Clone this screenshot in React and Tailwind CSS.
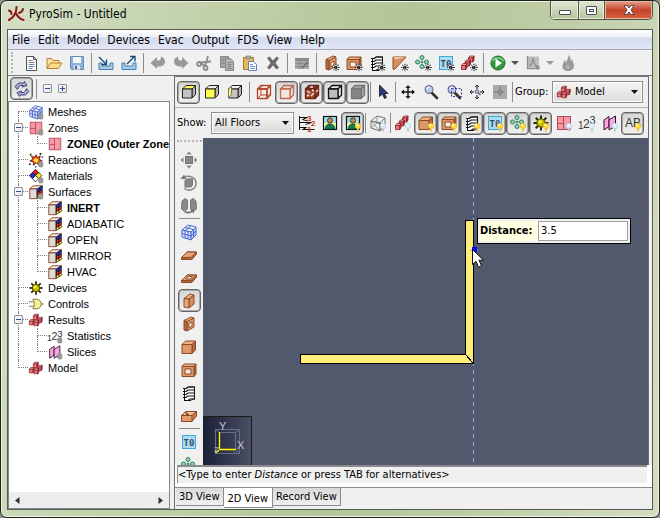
import { useState } from 'react'
import clsx from 'clsx'

const RAYS = [0, 45, 90, 135]
const EDGE = '#8a4a26'

function Icon({ children, size = 18 }) {
  return (
    <svg width={size} height={size} viewBox="0 0 18 18" fill="none" className="block shrink-0" aria-hidden="true">
      {children}
    </svg>
  )
}

// ---- overlays ----
const Star = () => (
  <g>
    <circle cx="14" cy="13.5" r="3" fill="#fff" opacity="0.8" />
    {RAYS.map(a => (
      <path key={a} d="M14 9.800v7.400" stroke="#111" strokeWidth="1" strokeDasharray="1.6 0.6" transform={`rotate(${a} 14 13.5)`} />
    ))}
  </g>
)

const Bulb = ({ off }) => (
  <g>
    <circle cx="14" cy="12" r="2.8" fill={off ? '#d8eef8' : '#ffd92e'} stroke={off ? '#a9c9dc' : '#e8b030'} strokeWidth="0.5" />
    <path d="M13 14.500h2V17.500h-2z" fill={off ? '#b4cbd8' : '#e9c860'} />
    <circle cx="13.2" cy="11.2" r="1" fill="#fff" />
  </g>
)

const Dot = () => <path d="M12 11.5c1.2-1 3.600-1 4.800 0v4.800c-1.200 1-3.600 1-4.800 0z" fill="#9a9a9a" stroke="#7f7f7f" strokeWidth="0.5" />

// ---- shapes ----
const Box = () => (
  <g stroke={EDGE} strokeWidth="1" strokeLinejoin="round">
    <path d="M2 6.500 5.500 3h10L12 6.500z" fill="#f0b184" />
    <path d="M12 6.500 15.500 3v9L12 15.500z" fill="#b8683b" />
    <path d="M2 6.500h10v9H2z" fill="#de9769" />
  </g>
)

const Room = () => (
  <g stroke={EDGE} strokeWidth="1" strokeLinejoin="round">
    <path d="M2 5.500 4 3h12l-2 2.500z" fill="#f0b184" />
    <path d="M14 5.500 16 3v10l-2 2.500z" fill="#b8683b" />
    <path d="M2 5.500h12v10H2z" fill="#de9769" />
    <path d="M5 8h6v5H5z" fill="#f8eee6" />
  </g>
)

const Wall = () => (
  <g stroke={EDGE} strokeWidth="1" strokeLinejoin="round">
    <path d="M4 6.500 10 2l4 1-5 4z" fill="#f0b184" />
    <path d="M9 7l5-4v9l-5 4z" fill="#d98d5f" />
    <path d="M4 6.500 9 7v9l-5-1z" fill="#e9a87c" />
  </g>
)

const WallHole = () => (
  <g stroke={EDGE} strokeWidth="1" strokeLinejoin="round">
    <path d="M4 5.500 11 2l3 1-6 4z" fill="#f0b184" />
    <path d="M7 6.500 14 3v9l-7 4z" fill="#e09b6e" />
    <path d="M4 5.500l3 1V16l-3-1z" fill="#b8683b" />
    <path d="M9 8.500 12 7v4l-3 2z" fill="#fff" />
  </g>
)

const Slab = ({ hole }) => (
  <g stroke={EDGE} strokeWidth="1" strokeLinejoin="round">
    <path d="M1.500 11.500 7 6h9.500v2L12 13.500H1.500z" fill="#b8683b" />
    <path d="M1.500 11.500 7 6h9.500L11 11.500z" fill="#e9a277" />
    {hole && <path d="M6 10l2-2.300h4.500l-2 2.300z" fill="#fff" />}
  </g>
)

const Tray = () => (
  <g stroke={EDGE} strokeWidth="1" strokeLinejoin="round">
    <path d="M1.500 8.500 6 4.500h10.500v4.500L12 14.500H1.500z" fill="#c9794b" />
    <path d="M1.500 8.500 6 4.500h10.500L12 8.500z" fill="#f2bd95" />
    <path d="M6.500 8.500V5.500L9 8z" fill="#a4592f" />
    <path d="M1.500 8.500H12v6H1.500z" fill="#e09b6e" />
  </g>
)

const Ramp = () => (
  <g>
    <path d="M2 3h13L3.500 15.500 2 15z" fill="#d98d5f" stroke={EDGE} strokeLinejoin="round" />
    <path d="M2 3h13L4.500 5.500z" fill="#f3c5a0" />
  </g>
)

const Vent = () => (
  <g stroke="#111">
    <path d="M4.500 4.500h2l2-1.500h6v12h-2l-1.500 1.500H4.500z" fill="#fff" />
    <path d="M3 4.500h3l2-1.500h7M3 7.500h3l2-1.500h7M3 10.500h3L8 9h7M3 13.500h3L8 12h7M4 16.500h4l2-1.500h5" strokeWidth="1.200" />
  </g>
)

const Circles = () => (
  <g fill="#8fd6b0" stroke="#2c7d57" strokeWidth="1">
    <circle cx="8" cy="3.500" r="2" />
    <circle cx="3.500" cy="8" r="2" />
    <circle cx="12.500" cy="8" r="2" />
    <circle cx="8" cy="12.500" r="2" />
    <circle cx="8" cy="8" r="1" />
  </g>
)

const Thermo = () => (
  <g>
    <rect x="2.500" y="2.500" width="13" height="13" fill="#a9dcf2" stroke="#42a8dc" />
    <text x="9" y="12.500" textAnchor="middle" fontSize="9" fontWeight="bold" fontFamily="DejaVu Sans Mono, monospace" fill="#35505e">T0</text>
  </g>
)

const CubeStack = ({ x, y }) => (
  <g stroke="#8a1c22" strokeWidth="0.800" strokeLinejoin="round">
    <path d={`M${x} ${y + 2}l1.500-2h4l-1.200 2z`} fill="#f7b4b4" />
    <path d={`M${x} ${y + 2}h4.300v4H${x}z`} fill="#e57a80" />
    <path d={`M${x + 4.300} ${y + 2}l1.200-2v4l-1.200 2z`} fill="#b8404a" />
  </g>
)

const RedCubes = () => (
  <g>
    <CubeStack x={6} y={2.500} />
    <CubeStack x={10.500} y={6} />
    <CubeStack x={1.500} y={8.500} />
    <CubeStack x={6.800} y={9.500} />
  </g>
)

const RedBlocks = () => (
  <g>
    <CubeStack x={8.500} y={2} />
    <CubeStack x={5} y={6} />
    <CubeStack x={1.500} y={9.500} />
  </g>
)

const Mesh = ({ gray }) => (
  <g stroke={gray ? '#777' : '#4a68cc'} strokeWidth="1">
    <path d="M2 7 8 2l8 2-5 5z" fill={gray ? 'none' : '#eef3ff'} />
    <path d="M2 7l9 2v8l-9-3z" fill={gray ? 'none' : '#dce6ff'} />
    <path d="M11 9l5-5v8l-5 5z" fill={gray ? 'none' : '#bccbf7'} />
    {gray
      ? <path d="M2 14 8 9l8 3M8 2v7M2 7l9 10M11 9l5 3" strokeWidth="0.700" />
      : <path d="M5 7.700v7.300M8 8.400V16M2 10.500l9 2.500 5-5M5 4.500l8.500 2V14.500M11 2.800 5 7.700" />}
  </g>
)

const Zone = () => (
  <g stroke="#a8505a">
    <rect x="2.500" y="2.500" width="13" height="13" fill="#fa98a4" />
    <path d="M8.500 2.500v13M2.500 9.500h6" />
  </g>
)

const Sun = () => (
  <g>
    {RAYS.map(a => <path key={a} d="M9 1.500v15" stroke="#2b2b12" strokeWidth="2" transform={`rotate(${a} 9 9)`} />)}
    <circle cx="9" cy="9" r="4.200" fill="#c9b800" stroke="#4a4600" />
    <circle cx="8" cy="7.800" r="1.700" fill="#f7ee4a" />
  </g>
)

const Digits = () => (
  <g fontFamily="Liberation Sans, sans-serif" fill="#333">
    <text x="0" y="15" fontSize="10">1</text>
    <text x="5" y="14" fontSize="12">2</text>
    <text x="11.500" y="10" fontSize="11">3</text>
  </g>
)

const Slices = () => (
  <g fill="#f7a8e2" stroke="#331126" strokeLinejoin="round">
    <path d="M3 6l5-3.500v10L3 16z" />
    <path d="M8 6l6.500-4v10L8 16z" />
  </g>
)

const Surface = () => (
  <g strokeLinejoin="round">
    <path d="M2 5.500 5.500 2H16l-5 3.500z" fill="#f2ece8" stroke="#8b3a1c" />
    <path d="M2 5.500h8v11H2z" fill="#dcdcdc" stroke="#8b3a1c" />
    <path d="M10 5.500 16.500 1.500v11.500L10 17z" fill="#111" />
    <path d="M10.800 6l2.200-1.300v2.800l-2.200 1.100zM13.800 4.200 16 3v2.800l-2.200 1.100z" fill="#2038e8" />
    <path d="M10.800 9.600l2.200-1.100v2.700l-2.200 1.200z" fill="#e02222" />
    <path d="M13.800 8l2.200-1v2.500l-2.200 1.200z" fill="#e02222" />
    <path d="M10.800 13.300l2.200-1.200v2.300l-2.200 1.300z" fill="#ffe01a" />
    <path d="M13.800 11.700l2.200-1.200v2l-2.200 1.300z" fill="#ffe01a" />
  </g>
)

const Reaction = () => (
  <g>
    <path d="M9 3l1.500 3L14 4.500 12.500 8 16 10l-3.500 1 .5 4-3.500-2.500L6 15l.3-3.500L2 10l3.500-2L3.500 4l4 2z" fill="#ff3a12" stroke="#2b1a00" strokeWidth="0.800" />
    <path d="M9 6l1 2 2-.5-1 1.800 1.500 1-2 .5L10 12.500 8.500 11 7 12l.3-2-1.800-.5L7 8.500 6.500 7l1.800.8z" fill="#ffe93b" />
    <path d="M2 2h2v2H2zM13 1h2v2h-2zM1 13h2v1.500H1zM8 16h1.500v1.500H8zM15.500 5H17v1.500h-1.500z" fill="#111" />
    <path d="M3 3l2 2M15 3l-1 1" stroke="#ffd400" />
  </g>
)

const Material = () => (
  <g stroke="#111" strokeWidth="0.900">
    <path d="M8.500 1.500 12 5 8.500 8.500 5 5z" fill="#e81818" />
    <path d="M5 5l3.500 3.500L5 12 1.500 8.500z" fill="#1530e0" />
    <path d="M12 5l3.500 3.500L12 12 8.500 8.500z" fill="#ffe51c" />
    <path d="M8.500 8.500 12 12l-3.500 3.500L5 12z" fill="#fff" />
  </g>
)

const Gate = () => (
  <g stroke="#6d6a3e">
    <path d="M5.500 3.500h4c4 0 5.500 3.500 5.500 5.500s-1.500 5.500-5.500 5.500h-4c2-3 2-8 0-11z" fill="#fbee8f" />
    <path d="M1 6.500h5M1 11.500h5M15 9h3" />
  </g>
)

const Person = () => (
  <g>
    <rect x="2.500" y="2.500" width="13" height="13" fill="#9fe2ee" stroke="#111" strokeWidth="1.200" />
    <rect x="3" y="9" width="12" height="3" fill="#f3f29b" />
    <circle cx="9" cy="6.500" r="2.600" fill="#c98849" stroke="#222" strokeWidth="0.800" />
    <path d="M4.500 15c0-4 2-5 4.500-5s4.500 1 4.500 5z" fill="#158045" stroke="#0b3d22" strokeWidth="0.800" />
  </g>
)

const WireCube = ({ color, face, back }) => (
  <g stroke={color} strokeWidth="1.300" strokeLinejoin="round">
    <path d="M2.500 6 6 2.500h9.500L12 6z" fill={back} />
    <path d="M12 6l3.500-3.500v9.500L12 15.500z" fill={back} />
    <path d="M2.500 6H12v9.500H2.500z" fill={face} />
  </g>
)

const ViewCube = ({ side }) => (
  <g stroke="#222" strokeWidth="1" strokeLinejoin="round">
    <path d="M2.500 6 6 2.500h9.500L12 6z" fill={side === 'top' ? '#ffff5a' : '#eee'} />
    <path d="M12 6l3.500-3.500v9L12 15z" fill="#b5b5b5" />
    <path d="M2.500 6H12v9H2.500z" fill={side === 'front' ? '#ffff50' : '#c4c4c4'} />
    {side === 'side' && <path d="M2.500 6l3-3v8.500l-3 3z" fill="#ffff5a" stroke="#777" />}
  </g>
)

const Magnifier = () => (
  <g>
    <path d="M10 10l5 5" stroke="#3c2b21" strokeWidth="2.600" strokeLinecap="round" />
    <circle cx="7" cy="6.500" r="4" fill="#b9c9ef" stroke="#555d78" />
    <path d="M5 6c.5-1.500 1.500-2 2.500-2" stroke="#fff" strokeWidth="1.200" />
  </g>
)

const Arrows = ({ color = '#111' }) => (
  <g fill={color}>
    {[0, 90, 180, 270].map(a => (
      <path key={a} d="M9 2l2.600 3H9.700v4H8.300V5H6.400z" transform={`rotate(${a} 9 9)`} />
    ))}
  </g>
)

const Page = () => (
  <g>
    <path d="M4.500 2.500h7l3 3v11h-10z" fill="#fffdf0" stroke="#4b5060" />
    <path d="M11.500 2.500v3h3" stroke="#4b5060" />
    <path d="M6.500 6.500h4M6.500 8.500h6M6.500 10.500h6M6.500 12.500h6M6.500 14.500h4" stroke="#6f86bd" />
  </g>
)

const Folder = () => (
  <g stroke="#b88030" strokeLinejoin="round">
    <path d="M2 14.500v-10h4.500l1.500 2h6v3" fill="#fbe3a0" />
    <path d="M2 14.500 5.500 9H17l-3.500 5.500z" fill="#ffd98c" />
  </g>
)

const Floppy = () => (
  <g>
    <path d="M2.500 2.500h13v13h-12l-1-1z" fill="#8fb2d8" stroke="#6a8db8" />
    <path d="M5 3h8v6H5z" fill="#f3f7fb" />
    <path d="M6 11.500h6v4H6z" fill="#e3eaf1" />
    <path d="M7 12h2v3H7z" fill="#41638c" />
  </g>
)

const Transfer = ({ out }) => (
  <g>
    <path d="M2 9v6.500h14V9h-3v3H5V9z" fill="#a9cbe8" stroke="#4580b4" />
    {out
      ? <path d="M7 10l7-7M10 2.500h5v5" stroke="#15497a" strokeWidth="1.300" />
      : <path d="M2 3l7 7M9.500 5.500v5h-5" stroke="#15497a" strokeWidth="1.300" />}
  </g>
)

const Undo = ({ flip }) => (
  <path
    d="M1.500 9 8 3v3.500h1c2.500 0 3-1.500 3-4 3 1 4.500 3.500 4 6-.5 2.500-3 4-6 4H8V15z"
    fill="#999"
    transform={flip ? 'translate(18 0) scale(-1 1)' : undefined}
  />
)

const Scissors = () => (
  <g stroke="#8b8b8b" strokeWidth="1.800">
    <path d="M5 8.500l11-1M10 13l3-11" />
    <circle cx="4" cy="10" r="2" />
    <circle cx="10.500" cy="14" r="2" />
    <path d="M5 9l5.500 3" />
  </g>
)

const Copy = () => (
  <g>
    <path d="M2.500 2.500h8v11h-8z" fill="#a3a3a3" stroke="#888" />
    <path d="M7.500 4.500h5l3 3v9h-8z" fill="#b3b3b3" stroke="#858585" />
    <path d="M9.500 8.500h4M9.500 10.500h4M9.500 12.500h4M9.500 14.500h4M4.500 5.500h2M4.500 7.500h2M4.500 9.500h2" stroke="#808080" />
  </g>
)

const Paste = () => (
  <g>
    <path d="M2.500 3.500h10v12h-10z" fill="#e8b65c" stroke="#ae7a24" />
    <path d="M5 2h5v3H5z" fill="#a7adb5" stroke="#777" strokeWidth="0.600" />
    <path d="M7.500 7.500h5l3 3v6h-8z" fill="#fff" stroke="#5d7eb0" />
    <path d="M9 10.500h3M9 12.500h5M9 14.500h5" stroke="#6b8ec0" />
  </g>
)

const Cross = () => <path d="M3 4l2.500-1.500L9 6.500l3.500-4L15 4l-3.500 5 3.500 4.500-2.500 2L9 11.500l-3.500 4L3 13.500 6.500 9z" fill="#6c6c6c" />

const EditTable = () => (
  <g>
    <path d="M2 4h14v11H2z" fill="#a8a8a8" />
    <path d="M2 4h14v3H2z" fill="#8a8a8a" />
    <path d="M2 9.500h14M2 12.500h14M7 7v8" stroke="#8c8c8c" />
    <path d="M9 14l6-6" stroke="#777" strokeWidth="2" />
  </g>
)

const Run = () => (
  <g>
    <circle cx="9" cy="9" r="7" fill="#2f9a3c" stroke="#1d6b31" />
    <path d="M3.500 7c1.500-4 9-4 11 0" stroke="#8fd18f" strokeWidth="1.500" />
    <path d="M6.500 4.500 13 9l-6.500 4.500z" fill="#fff" />
  </g>
)

const Plot = () => (
  <g>
    <path d="M3 2.500h12v11H3z" fill="#bdbdbd" />
    <path d="M3.500 2v12.500H16M5 12l2-1 2-6 2 6 3 1" stroke="#8e8e8e" strokeWidth="1.300" />
    <path d="M11 12h5l-2.500 4z" fill="#8e8e8e" />
  </g>
)

const Flame = () => (
  <g>
    <path d="M9 17c-4 0-6-2.500-5.500-5.500C4 9 5 8.500 5 6c1 .5 1.500 1.500 1.700 2.500C8 6.500 9.500 4.500 9.500 1c2 2 2.500 4 2 6.500L13.500 5c-.5 3 1.500 3.500 1.500 6.500 0 3-2 5.500-6 5.500z" fill="#999" />
    <path d="M8 15c-1.500-1.500-1-3.500 1-5 0 2 2.500 2.500 1.500 5" fill="#b5b5b5" />
  </g>
)

const FloorList = () => (
  <g stroke="#111">
    <path d="M1.500 2v14M1.500 3.500h8l-5 2 5 1.500M1.500 8.500h12l-6 2M1.500 13.500h7l-4 2h12" />
    <g fill="#cc3311" stroke="none" fontFamily="Liberation Sans, sans-serif" fontWeight="bold" fontSize="8">
      <text x="9" y="7">3</text>
      <text x="13" y="12">2</text>
      <text x="9" y="17.500">1</text>
    </g>
  </g>
)

const Sync = () => (
  <g fill="#a5a8df" stroke="#333859" strokeWidth="0.900" strokeLinejoin="round">
    <path d="M4.500 9.500 2 6.500 5.500 3h5l1-1.500 2.500 4-4.500 1.500.7-1.500h-3L5.500 7z" />
    <path d="M13.500 8.500l2.500 3-3.500 3.500h-5l-1 1.500-2.500-4L8.500 11l-.7 1.500h3L12.500 11z" />
  </g>
)

const Move3D = () => (
  <g fill="#888">
    <rect x="5.500" y="5.500" width="7" height="7" stroke="#707070" />
    {[0, 90, 180, 270].map(a => <path key={a} d="M9 0.500l2.800 3H6.200z" transform={`rotate(${a} 9 9)`} />)}
  </g>
)

const Rotate3D = () => (
  <g>
    <path d="M5 6.500 6.500 5h6v6l-1.500 2H5z" fill="#888" stroke="#707070" />
    <path d="M4 3.500c5-3 12.500 0 12 6.500-.5 6-8 8-12 4" stroke="#8c8c8c" strokeWidth="1.600" />
    <path d="M0.500 5 4 0.500 6 5z" fill="#777" />
  </g>
)

const Mirror3D = () => (
  <g fill="#888">
    <path d="M2 4l3-2.500 2.500 1.500v9L4 14l-2.500-2zM16 4l-3-2.500L10.500 3v9l3.500 2 2.500-2z" stroke="#777" />
    <path d="M4 15c3 2 6 2 8 0l2 1.500v-4h-4l1.200 1.200c-2 1.300-4 1-6 0z" fill="#777" />
  </g>
)

const Cursor = () => <path d="M5.500 2v11.500l3-2.500 2 4.500 2-1-2-4h3.500z" fill="#2d3a78" stroke="#111" strokeWidth="0.800" />

// ---- controls ----
function ToolButton({ label, pressed, disabled, children }) {
  return (
    <button
      type="button"
      aria-label={label}
      aria-pressed={pressed}
      disabled={disabled}
      className={clsx(
        'flex h-[23px] w-[23px] shrink-0 items-center justify-center rounded-[4px]',
        pressed && 'border border-[#666] bg-linear-to-b from-[#d6d6d6] to-[#f0f0f0] shadow-[inset_0_0_0_1px_#a8a8a8]'
      )}
    >
      <Icon>{children}</Icon>
    </button>
  )
}

const Sep = ({ wide }) => (
  <span className={clsx('flex h-5 shrink-0 justify-center', wide ? 'w-[6px]' : 'w-[2px]')}>
    <span className="w-px bg-[#8b8b8b]" />
  </span>
)

const DropArrow = ({ label, faded }) => (
  <button type="button" aria-label={label} className="flex h-5 w-3 shrink-0 items-center justify-center">
    <svg width="8" height="4" viewBox="0 0 8 4" aria-hidden="true">
      <path d="M0 0h8L4 4z" fill={faded ? '#999' : '#555'} />
    </svg>
  </button>
)

function Combo({ id, options, icon, className }) {
  return (
    <span className={clsx('relative flex h-[22px] shrink-0', className)}>
      <select
        id={id}
        className={clsx(
          'w-full appearance-none border border-[#8e8f8f] bg-linear-to-b from-[#f4f4f4] to-[#dcdcdc] text-[11px] leading-4 outline outline-1 -outline-offset-2 outline-white',
          icon ? 'pl-[22px]' : 'pl-[3px]'
        )}
      >
        {options.map(o => <option key={o}>{o}</option>)}
      </select>
      {icon && <span className="pointer-events-none absolute top-[3px] left-1"><Icon size={16}>{icon}</Icon></span>}
      <svg className="pointer-events-none absolute top-[9px] right-[5px]" width="7" height="4" viewBox="0 0 7 4" aria-hidden="true">
        <path d="M0 0h7L3.500 4z" fill="#111" />
      </svg>
    </span>
  )
}

// ---- window chrome ----
function TitleBar() {
  return (
    <header className="flex h-7 shrink-0 items-start justify-between">
      <div className="flex h-[25px] items-center gap-1">
        <Icon>
          <g stroke="#8c1414" strokeWidth="2" strokeLinecap="round">
            <path d="M9.500 2c0 6-2 10-7.500 13" />
            <path d="M9 8.500c1.500 3 4 5.500 7.500 6.500" />
            <path d="M2 5.500c1.500.5 2.500 2 2.500 3.500M16 4c-.5 2-2 3.500-4 4" />
          </g>
        </Icon>
        <h1 className="text-[12px] leading-4">PyroSim - Untitled</h1>
      </div>
      <div className="flex h-[19px] overflow-hidden rounded-b-[5px] border border-t-0 border-[#4d5643]">
        <button type="button" aria-label="Minimize" className="flex w-[27px] items-center justify-center bg-linear-to-b from-[#dfe6d3] via-[#cbd6b9] to-[#b5c59d] pt-1 shadow-[inset_0_0_0_1px_#e7eedc]">
          <span className="h-[5px] w-3 rounded-[1px] border border-[#4a4d55] bg-white" />
        </button>
        <button type="button" aria-label="Maximize" className="flex w-[27px] items-center justify-center border-x border-[#4d5643] bg-linear-to-b from-[#dfe6d3] via-[#cbd6b9] to-[#b5c59d] shadow-[inset_0_0_0_1px_#e7eedc]">
          <span className="flex h-[9px] w-[11px] items-center justify-center rounded-[1px] border border-[#4a4d55] bg-white">
            <span className="h-[3px] w-[5px] border border-[#4a4d55]" />
          </span>
        </button>
        <button type="button" aria-label="Close" className="flex w-[47px] items-center justify-center bg-linear-to-b from-[#e5a08c] via-[#c5432a] to-[#d8633f] shadow-[inset_0_0_0_1px_#eab5a0]">
          <svg width="12" height="10" viewBox="0 0 12 10" aria-hidden="true">
            <path d="M1 .5h3L6 3l2-2.500h3L8 5l3 4.500H8L6 7 4 9.500H1L4 5z" fill="#fff" stroke="#4a3c44" strokeWidth="0.900" />
          </svg>
        </button>
      </div>
    </header>
  )
}

const MENUS = ['File', 'Edit', 'Model', 'Devices', 'Evac', 'Output', 'FDS', 'View', 'Help']

function MenuBar() {
  return (
    <nav className="flex h-5 shrink-0 items-center gap-2 border-b border-[#a5a9b5] bg-[linear-gradient(#ffffff,#eceff7_38%,#d4dbed_40%,#e2e7f6)] pl-1 text-[12px] leading-4">
      {MENUS.map(m => <button key={m} type="button">{m}</button>)}
    </nav>
  )
}

function MainToolbar() {
  return (
    <div role="toolbar" aria-label="Main" className="flex h-[26px] shrink-0 items-center border-b border-[#77777f] pl-[3px]">
      <span className="mr-[6px] h-[21px] border-l-2 border-dotted border-[#b5b5b5]" />
      <ToolButton label="New"><Page /></ToolButton>
      <ToolButton label="Open"><Folder /></ToolButton>
      <ToolButton label="Save"><Floppy /></ToolButton>
      <Sep wide />
      <ToolButton label="Import"><Transfer /></ToolButton>
      <ToolButton label="Export"><Transfer out /></ToolButton>
      <Sep wide />
      <ToolButton label="Undo" disabled><Undo /></ToolButton>
      <ToolButton label="Redo" disabled><Undo flip /></ToolButton>
      <ToolButton label="Cut" disabled><Scissors /></ToolButton>
      <ToolButton label="Copy" disabled><Copy /></ToolButton>
      <ToolButton label="Paste"><Paste /></ToolButton>
      <ToolButton label="Delete" disabled><Cross /></ToolButton>
      <Sep wide />
      <ToolButton label="Properties" disabled><EditTable /></ToolButton>
      <Sep wide />
      <ToolButton label="New obstruction"><WallHole /><Star /></ToolButton>
      <ToolButton label="New hole"><Room /><Star /></ToolButton>
      <ToolButton label="New vent"><Vent /><Star /></ToolButton>
      <ToolButton label="New triangle"><Ramp /><Star /></ToolButton>
      <ToolButton label="New particles"><Circles /><Star /></ToolButton>
      <ToolButton label="New thermocouple"><Thermo /><Star /></ToolButton>
      <ToolButton label="New group"><RedBlocks /><Star /></ToolButton>
      <Sep wide />
      <ToolButton label="Run FDS"><Run /></ToolButton>
      <DropArrow label="Run options" />
      <ToolButton label="Plot results" disabled><Plot /></ToolButton>
      <DropArrow label="Plot options" faded />
      <ToolButton label="Smokeview" disabled><Flame /></ToolButton>
    </div>
  )
}

// ---- model tree ----
const TREE = [
  { name: 'Meshes', icon: <><Mesh /><Dot /></> },
  { name: 'Zones', icon: <><Zone /><Dot /></>, items: [{ name: 'ZONE0 (Outer Zone', icon: <Zone />, bold: true }] },
  { name: 'Reactions', icon: <><Reaction /><Dot /></> },
  { name: 'Materials', icon: <><Material /><Dot /></> },
  {
    name: 'Surfaces',
    icon: <><Surface /><Dot /></>,
    items: [
      { name: 'INERT', icon: <Surface />, bold: true },
      { name: 'ADIABATIC', icon: <Surface /> },
      { name: 'OPEN', icon: <Surface /> },
      { name: 'MIRROR', icon: <Surface /> },
      { name: 'HVAC', icon: <Surface /> },
    ],
  },
  { name: 'Devices', icon: <Sun /> },
  { name: 'Controls', icon: <Gate /> },
  {
    name: 'Results',
    icon: <RedCubes />,
    items: [
      { name: 'Statistics', icon: <><Digits /><Dot /></> },
      { name: 'Slices', icon: <><Slices /><Dot /></> },
    ],
  },
  { name: 'Model', icon: <RedCubes /> },
]

function ExpandBox({ open, label, onClick }) {
  return (
    <button type="button" aria-label={label} onClick={onClick} className="flex h-[9px] w-[9px] items-center justify-center rounded-[1px] border border-[#8a8f99] bg-linear-to-br from-white to-[#e2e2e2]">
      <svg width="5" height="5" viewBox="0 0 5 5" aria-hidden="true">
        <path d={open ? 'M0 2.500h5' : 'M0 2.500h5M2.500 0v5'} stroke="#2f4a9a" />
      </svg>
    </button>
  )
}

function Branch({ first, last, children }) {
  return (
    <span className="relative flex h-4 w-[19px] shrink-0 pl-[9px]">
      <span className="flex flex-1 flex-col">
        <span className={clsx('h-2 border-b border-dotted border-[#808080]', !first && 'border-l')} />
        <span className={clsx('h-2 border-dotted border-[#808080]', !last && 'border-l')} />
      </span>
      {children && <span className="absolute top-[3px] left-[5px]">{children}</span>}
    </span>
  )
}

const TreeLabel = ({ node }) => (
  <>
    <Icon size={16}>{node.icon}</Icon>
    <span className={clsx('pl-1 whitespace-nowrap', node.bold && 'font-bold')}>{node.name}</span>
  </>
)

function ModelTree() {
  const [closed, setClosed] = useState([])
  const toggle = name => setClosed(c => (c.includes(name) ? c.filter(n => n !== name) : [...c, name]))

  return (
    <ul className="min-h-0 flex-1 overflow-hidden pt-[2px] font-['Liberation_Sans',sans-serif] text-[11px] leading-4">
      {TREE.map((node, i) => {
        const last = i === TREE.length - 1
        const open = !closed.includes(node.name)
        return (
          <li key={node.name}>
            <div className="flex">
              <Branch first={i === 0} last={last}>
                {node.items && <ExpandBox open={open} label={`Toggle ${node.name}`} onClick={() => toggle(node.name)} />}
              </Branch>
              <TreeLabel node={node} />
            </div>
            {node.items && open && (
              <ul>
                {node.items.map((item, j) => (
                  <li key={item.name} className="flex">
                    <span className="flex w-[19px] shrink-0 pl-[9px]">
                      {!last && <span className="border-l border-dotted border-[#808080]" />}
                    </span>
                    <Branch last={j === node.items.length - 1} />
                    <TreeLabel node={item} />
                  </li>
                ))}
              </ul>
            )}
          </li>
        )
      })}
    </ul>
  )
}

function TreePanel() {
  return (
    <aside className="flex w-[162px] shrink-0 flex-col">
      <div className="flex h-[25px] shrink-0 items-center pl-[2px]">
        <ToolButton label="Synchronize selection" pressed><Sync /></ToolButton>
        <Sep wide />
        <span className="flex gap-[6px] pl-1">
          <ExpandBox open label="Collapse all" />
          <ExpandBox label="Expand all" />
        </span>
      </div>
      <div className="flex min-h-0 flex-1 flex-col border border-[#828790] bg-white">
        <ModelTree />
        <div className="flex h-4 shrink-0 items-center justify-between bg-[#ededed] px-[6px]">
          <button type="button" aria-label="Scroll left" className="block">
            <svg width="5" height="7" viewBox="0 0 5 7" aria-hidden="true"><path d="M4.500 0v7L0 3.500z" fill="#333" /></svg>
          </button>
          <button type="button" aria-label="Scroll right" className="block">
            <svg width="5" height="7" viewBox="0 0 5 7" aria-hidden="true"><path d="M.5 0v7L5 3.500z" fill="#333" /></svg>
          </button>
        </div>
      </div>
    </aside>
  )
}

// ---- view toolbars ----
function ViewToolbar() {
  return (
    <div role="toolbar" aria-label="View" className="flex h-[31px] shrink-0 items-center border-b border-[#b4b4b4] pl-[2px]">
      <ToolButton label="Top view" pressed><ViewCube side="top" /></ToolButton>
      <ToolButton label="Front view"><ViewCube side="front" /></ToolButton>
      <ToolButton label="Side view"><ViewCube side="side" /></ToolButton>
      <Sep wide />
      <ToolButton label="Wireframe">
        <WireCube color="#b5472a" />
        <path d="M6 2.500v9.500h9.500M6 12l-3.500 3.500" stroke="#b5472a" />
      </ToolButton>
      <ToolButton label="Outline" pressed><WireCube color="#c4694d" face="#f2e6e2" /></ToolButton>
      <Sep />
      <ToolButton label="Textures" pressed>
        <WireCube color="#6b2313" face="#a8432b" back="#8a3321" />
        <path d="M4 8l3 2M8 13l3-3M4 13l2-1M9 7l2 1M7 4h3M13 9l2-2" stroke="#e9e0d8" strokeWidth="1.500" />
      </ToolButton>
      <ToolButton label="Edges" pressed><WireCube color="#111" face="#bdbdbd" back="#e6e6e6" /></ToolButton>
      <ToolButton label="Solid" pressed><WireCube color="#777" face="#858585" back="#a3a3a3" /></ToolButton>
      <Sep />
      <ToolButton label="Select"><Cursor /></ToolButton>
      <Sep />
      <ToolButton label="Pan"><Arrows /></ToolButton>
      <ToolButton label="Zoom"><Magnifier /></ToolButton>
      <ToolButton label="Zoom box">
        <Magnifier />
        <rect x="6.500" y="5.500" width="10" height="8" stroke="#2b3f9e" strokeDasharray="2 1.500" />
      </ToolButton>
      <ToolButton label="Reset view">
        <path d="M9 2v4M9 12v4M2 9h4M12 9h4" stroke="#111" />
        <path d="M7 4l2-2 2 2M7 14l2 2 2-2M4 7 2 9l2 2M14 7l2 2-2 2" stroke="#111" strokeWidth="0.800" />
        <circle cx="9" cy="8.500" r="1.800" fill="#b9c9ef" stroke="#555d78" />
        <path d="M10.500 10l2 2" stroke="#7a4a24" strokeWidth="1.500" />
      </ToolButton>
      <ToolButton label="Reset to selection" disabled>
        <path d="M2 2h14v14H2z" fill="#a9a9a9" />
        <path d="M9 3v12M3 9h12" stroke="#777" strokeDasharray="4 2" />
        <circle cx="9" cy="9" r="2" fill="#999" stroke="#777" />
      </ToolButton>
      <Sep />
      <label htmlFor="group" className="w-[39px] shrink-0 pl-[2px] text-[11px] leading-4">Group:</label>
      <Combo id="group" options={['Model']} icon={<RedCubes />} className="w-[91px]" />
    </div>
  )
}

function ShowToolbar() {
  return (
    <div role="toolbar" aria-label="Show" className="flex h-[30px] shrink-0 items-center overflow-hidden pl-[2px]">
      <label htmlFor="floor" className="w-[34px] shrink-0 text-[11px] leading-4">Show:</label>
      <Combo id="floor" options={['All Floors']} className="mr-[1px] w-[83px]" />
      <ToolButton label="Floors"><FloorList /></ToolButton>
      <ToolButton label="Background image"><Person /></ToolButton>
      <ToolButton label="Show background" pressed><Person /><Bulb /></ToolButton>
      <Sep />
      <ToolButton label="Show meshes"><Mesh gray /><Bulb off /></ToolButton>
      <Sep />
      <ToolButton label="Show groups"><RedBlocks /><Bulb off /></ToolButton>
      <ToolButton label="Show obstructions" pressed><Box /><Bulb /></ToolButton>
      <ToolButton label="Show holes" pressed><Room /><Bulb /></ToolButton>
      <ToolButton label="Show vents" pressed><Vent /><Bulb /></ToolButton>
      <ToolButton label="Show thermocouples" pressed><Thermo /><Bulb /></ToolButton>
      <ToolButton label="Show particles" pressed><Circles /><Bulb /></ToolButton>
      <ToolButton label="Show devices" pressed><Sun /><Bulb /></ToolButton>
      <ToolButton label="Show zones"><Zone /><Bulb off /></ToolButton>
      <ToolButton label="Show statistics"><Digits /><Bulb off /></ToolButton>
      <ToolButton label="Show slices"><Slices /><Bulb off /></ToolButton>
      <ToolButton label="Show labels" pressed>
        <text x="1" y="13" fontSize="12" fontFamily="Liberation Sans, sans-serif" fill="#333">AB</text>
        <Bulb />
      </ToolButton>
    </div>
  )
}

const SideSep = () => <span className="my-px h-px w-[21px] shrink-0 bg-[#8b8b8b]" />

function DrawToolbar() {
  return (
    <div role="toolbar" aria-label="Draw" className="flex w-7 shrink-0 flex-col items-center overflow-hidden pt-[2px]">
      <span className="mb-[6px] w-[25px] shrink-0 border-t-2 border-dotted border-[#b5b5b5]" />
      <ToolButton label="Move" disabled><Move3D /></ToolButton>
      <ToolButton label="Rotate" disabled><Rotate3D /></ToolButton>
      <ToolButton label="Mirror" disabled><Mirror3D /></ToolButton>
      <SideSep />
      <ToolButton label="Draw mesh"><Mesh /></ToolButton>
      <ToolButton label="Draw slab"><Slab /></ToolButton>
      <ToolButton label="Draw slab hole"><Slab hole /></ToolButton>
      <ToolButton label="Draw wall" pressed><Wall /></ToolButton>
      <ToolButton label="Draw wall hole"><WallHole /></ToolButton>
      <ToolButton label="Draw block"><Box /></ToolButton>
      <ToolButton label="Draw block hole"><Room /></ToolButton>
      <ToolButton label="Draw vent"><Vent /></ToolButton>
      <ToolButton label="Draw room"><Tray /></ToolButton>
      <SideSep />
      <ToolButton label="Draw device"><Thermo /></ToolButton>
      <ToolButton label="Draw particle cloud"><Circles /></ToolButton>
    </div>
  )
}

// ---- drawing area ----
function Viewport() {
  const [distance, setDistance] = useState('3.5')

  return (
    <div className="relative min-w-0 flex-1 overflow-hidden bg-[#53596d]">
      <svg className="absolute inset-0 h-full w-full" shapeRendering="crispEdges" aria-hidden="true">
        <path d="M270.500 0v1200" stroke="#6ab8ee" strokeDasharray="4 4" />
        <path d="M262.500 82.500h8v143H97.500v-9h165z" fill="#ffee7a" stroke="#000" />
        <path d="M262.500 216.500l8 9" stroke="#000" />
        <path d="M267 112.500h8" stroke="#6ab8ee" />
        <rect x="269" y="109" width="5" height="5" fill="#0000ff" />
      </svg>

      {/* axis gizmo */}
      <svg className="absolute bottom-0 left-0 bg-linear-to-r from-[#1c2035] to-[#4a5066]" width="49" height="49" viewBox="0 0 49 49" fill="none" aria-hidden="true">
        <path d="M0 .5h48.500V49" stroke="#1c1a14" />
        <path d="M12.500 13.500h24v24h-24zM16.500 16.500h16v17h-16zM12.500 13.500l4 3M36.500 13.500l-4 3M36.500 37.500l-4-4" stroke="#686d8c" />
        <path d="M16.500 16v17M16.500 33.500H33M16 34l-3.500 3" stroke="#ffff00" strokeWidth="1.300" />
        <g fill="#c4c7d0" fontFamily="Liberation Sans, sans-serif" fontSize="11">
          <text x="16" y="14">Y</text>
          <text x="34" y="33">X</text>
          <text x="11" y="36" fontSize="8">Z</text>
        </g>
      </svg>

      <div className="absolute top-20 left-[274px] flex h-[26px] w-[154px] items-stretch border border-black bg-[#f0f0f0] p-[2px]">
        <label htmlFor="distance" className="flex w-[58px] shrink-0 items-center bg-[#ffffe1] text-[11px] leading-4 font-bold">Distance:</label>
        <input
          id="distance"
          autoFocus
          value={distance}
          onChange={e => setDistance(e.target.value)}
          className="min-w-0 flex-1 border border-[#a0a0a6] bg-white px-[2px] text-[11px] leading-4 outline-none"
        />
      </div>

      <svg className="absolute top-[110px] left-[268px]" width="14" height="21" viewBox="0 0 14 21" aria-hidden="true">
        <path d="M1.500 1.500v15l3.500-3.300 2.500 6 3-1.300-2.500-5.700h4.500z" fill="#fff" stroke="#111" />
      </svg>
    </div>
  )
}

const TABS = ['3D View', '2D View', 'Record View']

function ViewTabs() {
  const [active, setActive] = useState('2D View')
  return (
    <div role="tablist" className="flex h-[21px] shrink-0 items-start bg-[#f0f0f0] pl-px text-[11px] leading-4">
      {TABS.map(tab => (
        <button
          key={tab}
          type="button"
          role="tab"
          aria-selected={tab === active}
          onClick={() => setActive(tab)}
          className={clsx(
            'border-r border-b border-[#8a8a96]',
            tab === active ? 'h-5 bg-white px-1 pt-[2px]' : 'h-[18px] bg-linear-to-b from-[#d9d9d9] to-[#f0f0f0] px-[3px]'
          )}
        >
          {tab}
        </button>
      ))}
    </div>
  )
}

export default function App() {
  return (
    <div className="h-screen bg-[#8d8f88]">
      <div className="flex h-full flex-col rounded-[7px] border border-[#1d1f1a] bg-[linear-gradient(100deg,#d5dfc6,#c3d2ac_25%,#b4c597_55%,#becda6_75%,#d3ddc3)] px-[6px] pb-[7px] font-['DejaVu_Sans_Condensed','Noto_Sans',sans-serif] text-black shadow-[inset_0_0_0_1px_#eef4e4]">
        <TitleBar />
        <div className="flex min-h-0 flex-1 flex-col border border-[#55594f] bg-[#f0f0f0]">
          <MenuBar />
          <MainToolbar />
          <main className="flex min-h-0 flex-1">
            <TreePanel />
            <section className="ml-1 flex min-w-0 flex-1 flex-col border-l border-[#6e6e78]">
              <div className="mr-[3px] flex min-h-0 flex-1 flex-col border-t border-r border-[#6e6e78]">
                <ViewToolbar />
                <ShowToolbar />
                <div className="flex min-h-0 flex-1">
                  <DrawToolbar />
                  <Viewport />
                </div>
              </div>
              <div className="shrink-0 border-b border-[#8a8a96] bg-white pr-[5px] pb-1 pl-[2px]">
                <p className="h-[18px] border-t-2 border-l border-[#8a8a8a] bg-[#f0f0f0] text-[11px] leading-4">
                  &lt;Type to enter <i>Distance</i> or press TAB for alternatives&gt;
                </p>
              </div>
              <ViewTabs />
            </section>
          </main>
        </div>
      </div>
    </div>
  )
}
